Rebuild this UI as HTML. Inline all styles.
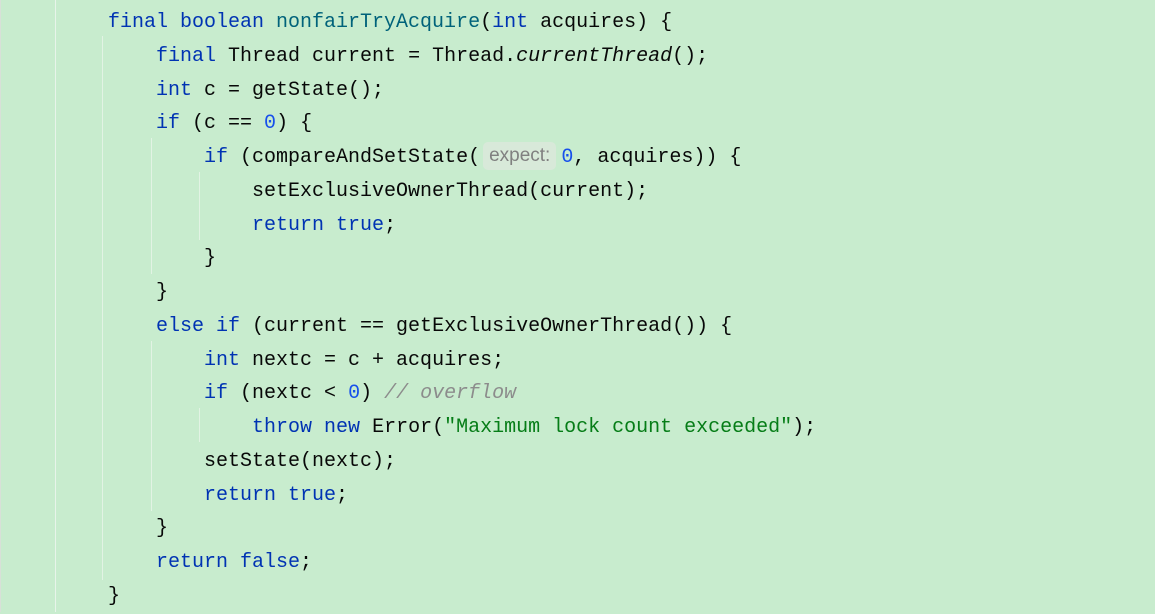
<!DOCTYPE html>
<html><head><meta charset="utf-8"><style>
html,body{margin:0;padding:0;}
body{width:1155px;height:612px;background:#c8ecce;position:relative;overflow:hidden;font-family:"Liberation Mono",monospace;font-size:20px;color:#080808;}
.code{position:absolute;left:108px;top:6px;white-space:pre;line-height:33.75px;}
.k{color:#0033b3}.m{color:#00627a}.n{color:#1750eb}.s{color:#067d17}.c{color:#8c8c8c;font-style:italic}
.i{font-style:italic}
.h{display:inline-block;background:#d8e9d9;color:#808080;font-family:"Liberation Sans",sans-serif;font-size:19px;line-height:28px;padding:0 6px;border-radius:5px;margin:0 5px 0 3px;vertical-align:1px}
.v{position:absolute;width:1px;background:#e2f3e4}
</style></head><body>
<div class="v" style="left:0;top:0;height:612px;background:#d8e0d8"></div>
<div class="v" style="left:55px;top:0;height:612px;background:#e8f4ea"></div>
<div class="v" style="left:102px;top:36px;height:544px"></div>
<div class="v" style="left:151px;top:138px;height:136px"></div>
<div class="v" style="left:199px;top:172px;height:68px"></div>
<div class="v" style="left:151px;top:341px;height:170px"></div>
<div class="v" style="left:199px;top:408px;height:34px"></div>
<div class="code"><span class="k">final boolean </span><span class="m">nonfairTryAcquire</span>(<span class="k">int</span> acquires) {
    <span class="k">final</span> Thread current = Thread.<span class="i">currentThread</span>();
    <span class="k">int</span> c = getState();
    <span class="k">if</span> (c == <span class="n">0</span>) {
        <span class="k">if</span> (compareAndSetState(<span class="h">expect:</span><span class="n">0</span>, acquires)) {
            setExclusiveOwnerThread(current);
            <span class="k">return true</span>;
        }
    }
    <span class="k">else if</span> (current == getExclusiveOwnerThread()) {
        <span class="k">int</span> nextc = c + acquires;
        <span class="k">if</span> (nextc &lt; <span class="n">0</span>) <span class="c">// overflow</span>
            <span class="k">throw new</span> Error(<span class="s">"Maximum lock count exceeded"</span>);
        setState(nextc);
        <span class="k">return true</span>;
    }
    <span class="k">return false</span>;
}</div>
</body></html>
